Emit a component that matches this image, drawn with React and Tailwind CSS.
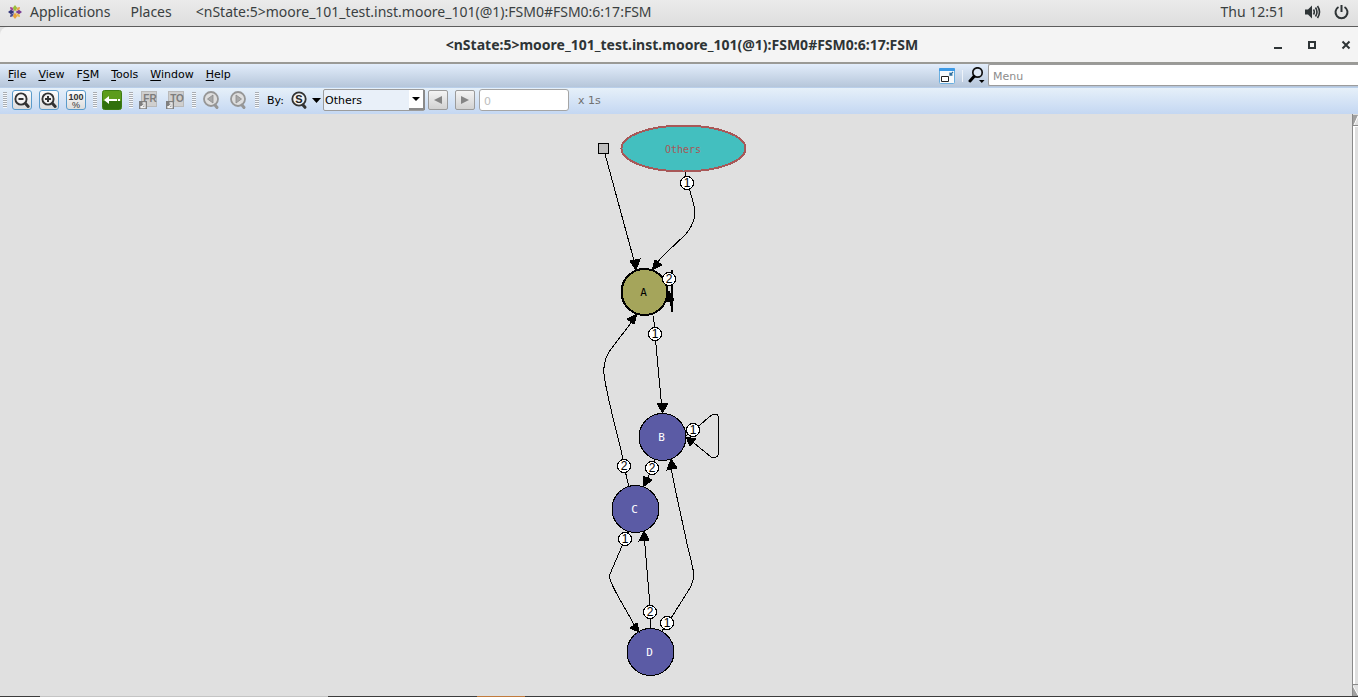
import React, { useState } from "react";

const TITLE = "<nState:5>moore_101_test.inst.moore_101(@1):FSM0#FSM0:6:17:FSM";

function Grip() {
  return (
    <span
      aria-hidden="true"
      className="h-4 w-1 bg-[repeating-linear-gradient(to_bottom,#a9adb3_0px,#a9adb3_1px,#f6f9fc_1px,#f6f9fc_2px)]"
    />
  );
}

function Group({ children }) {
  return (
    <div className="flex items-center gap-[5px]">
      <Grip />
      <div className="flex items-center gap-[7px]">{children}</div>
    </div>
  );
}

function ToolButton({ label, framed, children }) {
  const frame = framed
    ? "rounded-[3px] border border-[#5a9bcb] bg-linear-to-b from-[#fdfdfd] to-[#dcdcdc]"
    : "";
  return (
    <button type="button" aria-label={label} className={"flex size-5 items-center justify-center " + frame}>
      {children}
    </button>
  );
}

function Magnifier({ mark }) {
  return (
    <svg width="18" height="18" viewBox="0 0 18 18" fill="none" stroke="#333">
      <circle cx="8" cy="8" r="5.6" strokeWidth="1.9" fill="#f4f4f4" />
      <path d="M12.500 12.500l2.700 3" strokeWidth="3" strokeLinecap="round" />
      <path d={mark} strokeWidth="2" />
    </svg>
  );
}

function SearchStep({ d }) {
  return (
    <svg width="20" height="20" viewBox="0 0 20 20" fill="none" className="shrink-0">
      <circle cx="10" cy="9" r="7" stroke="#969696" strokeWidth="1.8" fill="#dedede" />
      <path d="M14 15l2 2.500" stroke="#969696" strokeWidth="3" strokeLinecap="round" />
      <path d={d} fill="#a8a8a8" stroke="#8a8a8a" strokeWidth="0.8" />
    </svg>
  );
}

function ScopeIcon({ text }) {
  return (
    <svg width="20" height="20" viewBox="0 0 20 20">
      <rect x="3.500" y="1.500" width="15" height="15" fill="#cfcfcf" stroke="#b9b9b9" />
      <text x="12" y="12" textAnchor="middle" className="fill-[#7d7d7d] font-['Liberation_Sans'] text-[10px] font-bold">
        {text}
      </text>
      <rect x="1" y="11" width="8" height="8" fill="#7f7f7f" />
      <path d="M3 16v1.500h4V13H4.500M6 14.500L3.500 17" stroke="#f2f2f2" fill="none" strokeWidth="1.300" />
    </svg>
  );
}

function Bubble({ x, y, n }) {
  return (
    <g>
      <circle cx={x} cy={y} r="6.5" fill="#fff" stroke="#000" />
      <text x={x} y={y + 4} textAnchor="middle" className="fill-black font-['Liberation_Sans'] text-[12px]">
        {n}
      </text>
    </g>
  );
}

function StateNode({ x, y, name, active }) {
  return (
    <g>
      <circle
        cx={x}
        cy={y}
        r={active ? 23 : 23.5}
        fill={active ? "#a5a55b" : "#5b5ba5"}
        stroke="#000"
        strokeWidth={active ? 2 : 1}
      />
      <text
        x={x - 1}
        y={y + 4}
        textAnchor="middle"
        className={
          active
            ? "fill-black font-['DejaVu_Sans_Mono'] text-[11px]"
            : "fill-white font-['DejaVu_Sans_Mono'] text-[11px]"
        }
      >
        {name}
      </text>
    </g>
  );
}

const edges = [
  "M605 154 L635.5 266",
  "M685 171 L686 178 L692 198 Q696 210 694 219 Q692 227 685 235 L667 252 Q661 257 655 266",
  "M668.5 291 L672 312",
  "M653.5 316 L655 334 L662 410",
  "M629 487 L624 466 L621 450 Q605 387 604 374 Q603 362 609 352 C615 343 624 333 635 317",
  "M686 436 L701 424 L711 415.500 Q717 412 718.500 417 V454 Q717 459 711 457 L688 438",
  "M655 458 L652 468 L645 485",
  "M670 462 C676 496 684 528 687 544 Q694 571 694 577 Q693 582 690 588 L673 615 L662 631",
  "M629 531 L625 539 L610 574 Q609 578 611 582 C617 597 629 613 637 631",
  "M650.500 629 L650 606 L644 534",
];

const heads = [
  "636,270 630,261 640,259",
  "652,270 655,260 662,265",
  "669,291 666,302 674,300",
  "662.500,413 657,403 668,403",
  "637,314 634,324 627,319",
  "686,437 696,439 690,446",
  "643,487 643,476 652,480",
  "671,459 667,470 677,468",
  "639,632 630,628 637,623",
  "644,531 639,541 649,540",
];

function StateDiagram() {
  return (
    <svg
      width="180"
      height="582"
      viewBox="586 114 180 582"
      role="img"
      aria-label="State diagram"
      shapeRendering="crispEdges"
      className="shrink-0"
    >
      <g fill="none" stroke="#000" strokeWidth="1">
        {edges.map((d) => (
          <path key={d} d={d} />
        ))}
        <path d="M672 270V312" strokeWidth="2" />
      </g>
      <rect x="598.5" y="143.5" width="10" height="10" fill="#bebebe" stroke="#000" />
      <ellipse cx="683.5" cy="148.5" rx="62" ry="23" fill="#43bfbf" stroke="#a85858" strokeWidth="2" />
      <text x="683" y="153" textAnchor="middle" className="fill-[#a85858] font-['DejaVu_Sans_Mono'] text-[10px]">
        Others
      </text>
      <StateNode x={644.5} y={292} name="A" active />
      <StateNode x={662.5} y={437} name="B" />
      <StateNode x={635.5} y={509} name="C" />
      <StateNode x={650.5} y={652} name="D" />
      {heads.map((p) => (
        <polygon key={p} points={p} fill="#000" stroke="#000" strokeWidth="1" />
      ))}
      <Bubble x={687} y={183} n="1" />
      <Bubble x={669} y={279} n="2" />
      <Bubble x={655} y={334} n="1" />
      <Bubble x={693} y={430} n="1" />
      <Bubble x={624} y={466} n="2" />
      <Bubble x={652} y={468} n="2" />
      <Bubble x={625} y={539} n="1" />
      <Bubble x={650} y={612} n="2" />
      <Bubble x={667} y={623} n="1" />
    </svg>
  );
}

function AppsLogo() {
  return (
    <svg width="14" height="14" viewBox="0 0 14 14">
      <path d="M7 0l2.300 3L7 6.500 4.700 3z" fill="#9bbf3b" />
      <path d="M14 7l-3 2.300L7.500 7 11 4.700z" fill="#7b3f92" />
      <path d="M7 14l-2.300-3L7 7.500 9.300 11z" fill="#e8a33d" />
      <path d="M0 7l3-2.300L6.500 7 3 9.300z" fill="#33377a" />
      <path d="M2 2l2.500.5L6 6 2.500 4.500z" fill="#a3438f" />
      <path d="M12 2l-2.500.5L8 6l3.500-1.500z" fill="#e9a04a" />
      <path d="M12 12l-2.500-.5L8 8l3.500 1.500z" fill="#e6b84c" />
      <path d="M2 12l2.500-.5L6 8 2.500 9.500z" fill="#4a4b93" />
    </svg>
  );
}

function DesktopBar() {
  return (
    <header className="flex h-[27px] shrink-0 items-center border-b border-[#5c5c5c] bg-linear-to-b from-[#ebebeb] to-[#dedede] px-2 pb-[3px] font-['Noto_Sans',sans-serif] text-[14px] text-[#3a3f41]">
      <button type="button" className="flex items-center gap-2">
        <AppsLogo />
        Applications
      </button>
      <button type="button" className="ml-5">Places</button>
      <button type="button" className="ml-6 whitespace-nowrap">{TITLE}</button>
      <time className="ml-auto">Thu 12:51</time>
      <button type="button" aria-label="Volume" className="ml-5">
        <svg width="17" height="16" viewBox="0 0 17 16" fill="none" stroke="#2e3436" strokeWidth="1.6">
          <path d="M0 5.500h3l4-4v13l-4-4H0z" fill="#2e3436" stroke="none" />
          <path d="M8.500 5.500q1.600 2.500 0 5M10.500 3.500q3 4.500 0 9M12.500 2q4 6 0 12" />
        </svg>
      </button>
      <button type="button" aria-label="Power" className="ml-3">
        <svg width="16" height="16" viewBox="0 0 16 16" fill="none" stroke="#2e3436" strokeWidth="2">
          <path d="M4.500 3a6 6 0 1 0 6 0M7.500 1v7" />
        </svg>
      </button>
    </header>
  );
}

function TitleBar() {
  return (
    <div className="grid h-[37px] shrink-0 grid-cols-[1fr_auto_1fr] items-center rounded-tl-lg border-b-2 border-[#9a9a96] bg-[#f4f4f4] pl-1.5 text-[#2e3436]">
      <h1 className="col-start-2 font-['Noto_Sans',sans-serif] text-[14px] font-bold whitespace-nowrap">{TITLE}</h1>
      <div className="flex items-center justify-end gap-[22px] pr-1.5">
        <button type="button" aria-label="Minimize">
          <svg width="12" height="12" viewBox="0 0 12 12"><path d="M2 8h8v2H2z" fill="#2e3436" /></svg>
        </button>
        <button type="button" aria-label="Maximize">
          <svg width="12" height="12" viewBox="0 0 12 12"><path d="M3 3h6v6H3z" fill="none" stroke="#2e3436" strokeWidth="2" /></svg>
        </button>
        <button type="button" aria-label="Close">
          <svg width="12" height="12" viewBox="0 0 12 12"><path d="M2.500 2.500l7 7M9.500 2.500l-7 7" stroke="#2e3436" strokeWidth="2" /></svg>
        </button>
      </div>
    </div>
  );
}

const menus = [
  ["", "F", "ile"],
  ["", "V", "iew"],
  ["F", "S", "M"],
  ["", "T", "ools"],
  ["", "W", "indow"],
  ["", "H", "elp"],
];

function MenuBar() {
  return (
    <nav className="flex h-6 shrink-0 items-center border-b border-[#b9cfea] bg-linear-to-b from-[#e2edfb] to-[#b6c6da] pl-2">
      <div className="flex gap-3">
        {menus.map(([pre, key, post]) => (
          <button key={key} type="button">
            {pre}
            <span className="underline underline-offset-2">{key}</span>
            {post}
          </button>
        ))}
      </div>
      <div className="ml-auto flex items-center self-stretch">
        <button type="button" aria-label="Undock window">
          <svg width="16" height="16" viewBox="0 0 16 16">
            <rect x="0.500" y="0.500" width="15" height="15" rx="1" fill="#f7fafc" stroke="#6aaede" />
            <path d="M0 1q0-1 1-1h14q1 0 1 1v2H0z" fill="#3d9ae6" />
            <path d="M2.500 8.500h7v5h-7z" fill="#fff" stroke="#222" />
            <path d="M14 4l-2.500 2.500M11 4.500v2.500h2.500" stroke="#2d6f9e" strokeWidth="1.300" fill="none" />
          </svg>
        </button>
        <span className="ml-[7px] h-3 w-px bg-[#eef3f9]" />
        <button type="button" aria-label="Search options" className="ml-[5px]">
          <svg width="17" height="17" viewBox="0 0 17 17">
            <circle cx="9.500" cy="5.500" r="4.700" fill="#dfe9f5" stroke="#111" strokeWidth="1.700" />
            <path d="M6 9.500L2 14" stroke="#000" strokeWidth="3" strokeLinecap="round" />
            <path d="M11 13h5.500l-2.700 3z" />
          </svg>
        </button>
        <input
          aria-label="Menu search"
          placeholder="Menu"
          className="ml-[3px] h-[22px] w-[370px] self-start rounded-l-[2px] border border-r-0 border-[#9c9c9c] bg-white px-1 pt-0.5 outline-none placeholder:text-[#8c8c8c]"
        />
      </div>
    </nav>
  );
}

function StepButton({ label, d }) {
  return (
    <button
      type="button"
      aria-label={label}
      className="flex size-5 items-center justify-center rounded-[2px] border border-[#9b9b9b] bg-linear-to-b from-[#f4f4f4] to-[#d2d2d2]"
    >
      <svg width="8" height="8" viewBox="0 0 8 8"><path d={d} fill="#858585" /></svg>
    </button>
  );
}

function ToolBar() {
  const [by, setBy] = useState("Others");
  return (
    <div className="flex h-[26px] shrink-0 items-center gap-[7px] bg-linear-to-b from-[#e6f0f9] to-[#c4d7f2] pb-0.5 pl-[3px]">
      <Group>
        <ToolButton label="Zoom out" framed><Magnifier mark="M5.500 8h5" /></ToolButton>
        <ToolButton label="Zoom in" framed><Magnifier mark="M5 8h6M8 5v6" /></ToolButton>
        <ToolButton label="Zoom to 100%" framed>
          <svg width="18" height="18" viewBox="0 0 18 18" className="shrink-0 fill-[#333] font-['Liberation_Sans']">
            <text x="9" y="9" textAnchor="middle" className="text-[9px] font-bold">100</text>
            <text x="9" y="17" textAnchor="middle" className="text-[9px]">%</text>
          </svg>
        </ToolButton>
      </Group>
      <Group>
        <ToolButton label="Back">
          <svg width="20" height="20" viewBox="0 0 20 20">
            <rect x="0.500" y="0.500" width="19" height="19" rx="2" fill="#5c9c1c" stroke="#3d7d14" />
            <path d="M1 11h18v7q0 1-1 1H2q-1 0-1-1z" fill="#31700d" />
            <path d="M2 10l5-4v3h5v2H7v3zM12 9h3v2h-3zM16 9h2v2h-2z" fill="#fff" />
          </svg>
        </ToolButton>
      </Group>
      <Group>
        <ToolButton label="From state"><ScopeIcon text="FR" /></ToolButton>
        <ToolButton label="To state"><ScopeIcon text="TO" /></ToolButton>
      </Group>
      <Group>
        <ToolButton label="Find previous"><SearchStep d="M12 5v8L6.500 9z" /></ToolButton>
        <ToolButton label="Find next"><SearchStep d="M8 5v8L13.500 9z" /></ToolButton>
      </Group>
      <div className="flex items-center">
        <Grip />
        <label htmlFor="by" className="ml-2 pt-0.5">By:</label>
        <button type="button" aria-label="Search type" className="ml-[7px] flex items-center gap-1">
          <svg width="17" height="20" viewBox="0 0 17 20">
            <circle cx="8" cy="9" r="6.700" fill="#f2f2f2" stroke="#333" strokeWidth="1.800" />
            <path d="M12 15l2 2.300" stroke="#333" strokeWidth="3" strokeLinecap="round" />
            <text x="8" y="13" textAnchor="middle" className="fill-[#222] font-['Liberation_Sans'] text-[11px] font-bold">S</text>
          </svg>
          <svg width="9" height="5" viewBox="0 0 9 5"><path d="M0 0h9L4.500 5z" /></svg>
        </button>
        <div className="relative ml-0.5">
          <select
            id="by"
            value={by}
            onChange={(e) => setBy(e.target.value)}
            className="h-[22px] w-[102px] appearance-none rounded-[2px] border border-[#9c9c9c] bg-[#e9f0f9] pt-0.5 pl-px outline-none"
          >
            <option>Others</option>
            <option>A</option>
            <option>B</option>
            <option>C</option>
            <option>D</option>
          </select>
          <span className="pointer-events-none absolute inset-y-px right-0 flex w-4 items-center justify-center border-r-2 border-b-2 border-[#8a8a8a] bg-white">
            <svg width="8" height="4" viewBox="0 0 8 4"><path d="M0 0h8L4 4z" /></svg>
          </span>
        </div>
        <div className="ml-[3px] flex gap-[7px]">
          <StepButton label="Previous" d="M8 0v8L0 4z" />
          <StepButton label="Next" d="M0 0v8l8-4z" />
        </div>
        <input
          id="time"
          placeholder="0"
          className="ml-1 h-[22px] w-[90px] rounded-[3px] border border-[#a5a5a5] bg-white px-1 pt-0.5 outline-none placeholder:text-[#bdbdbd]"
        />
        <label htmlFor="time" className="ml-[9px] pt-0.5 text-[#707070]">x 1s</label>
      </div>
    </div>
  );
}

function ScrollBar() {
  return (
    <div className="flex w-1.5 shrink-0 flex-col overflow-hidden border-l border-[#8a8a8a] bg-[#dfdfdf]">
      <button type="button" aria-label="Scroll up" className="h-3 shrink-0 border-b border-[#8a8a8a]">
        <svg width="5" height="10" viewBox="0 0 5 10" className="block">
          <path d="M0 0h5L1 10H0z" fill="#a0a0a0" />
          <path d="M5 1L1 10" stroke="#fff" />
        </svg>
      </button>
      <div className="flex-1 border-t border-l-2 border-white" />
      <button type="button" aria-label="Scroll down" className="h-3 shrink-0 border-t border-[#8a8a8a]">
        <svg width="5" height="10" viewBox="0 0 5 10" className="block">
          <path d="M0 0L5 9V10H0z" fill="#a0a0a0" />
          <path d="M0 0L5 9" stroke="#fff" />
        </svg>
      </button>
    </div>
  );
}

export default function App() {
  return (
    <div className="flex min-h-screen flex-col bg-[#e0e0e0] font-['DejaVu_Sans',sans-serif] text-[11px] text-black">
      <DesktopBar />
      <TitleBar />
      <MenuBar />
      <ToolBar />
      <main className="flex flex-1">
        <div className="flex flex-1 justify-center">
          <StateDiagram />
        </div>
        <ScrollBar />
      </main>
      <footer className="flex h-px bg-[#3c3c3c]">
        <span className="w-10" />
        <span className="w-72 bg-[#c4c4c4]" />
        <span className="ml-[149px] w-12 bg-[#c07a3c]" />
      </footer>
    </div>
  );
}
